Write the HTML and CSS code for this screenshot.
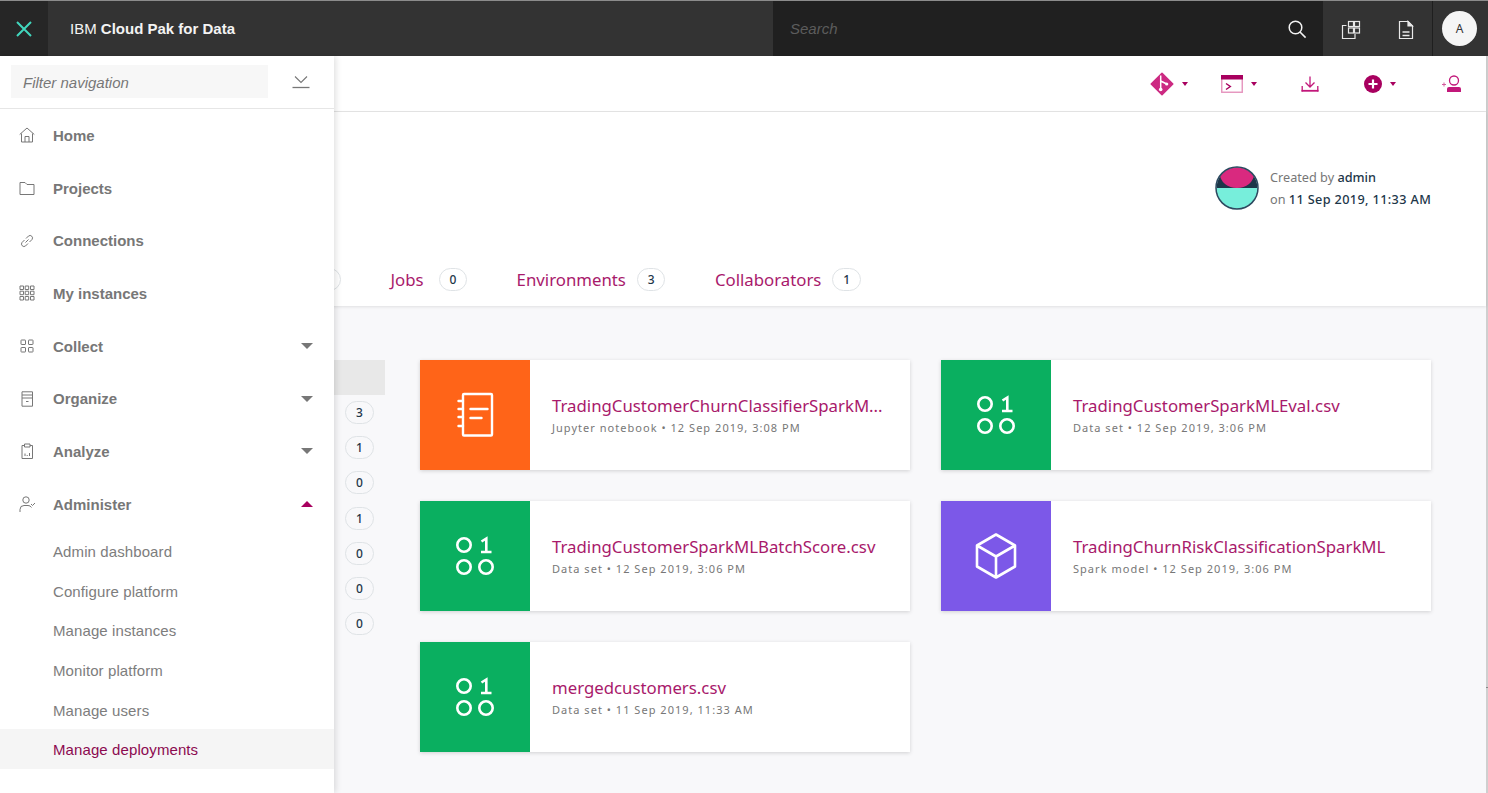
FILE: index.html
```html
<!DOCTYPE html>
<html lang="en">
<head>
<meta charset="utf-8">
<title>IBM Cloud Pak for Data</title>
<link rel="stylesheet" href="styles.css">
</head>
<body>
<header class="topbar">
  <button class="close-btn" aria-label="Close navigation">
    <svg width="16" height="16" viewBox="0 0 16 16"><path d="M1 1l14 14M15 1L1 15" stroke="#41d6bd" stroke-width="2" fill="none"/></svg>
  </button>
  <div class="brand">IBM <b>Cloud Pak for Data</b></div>
  <div class="search">
    <span class="search-text">Search</span>
    <svg class="search-icon" width="20" height="20" viewBox="0 0 20 20"><circle cx="8.500" cy="8.500" r="6.300" stroke="#f3f3f3" stroke-width="1.500" fill="none"/><path d="M13 13l5.600 5.600" stroke="#f3f3f3" stroke-width="1.600" fill="none"/></svg>
  </div>
  <div class="top-icons">
    <svg width="20" height="22" viewBox="0 0 20 22" fill="none" stroke="#e8e8e8" stroke-width="1.200"><rect x="7.500" y="3.500" width="5" height="5"/><rect x="13.500" y="3.500" width="5" height="5"/><rect x="7.500" y="10" width="5" height="5"/><rect x="13.500" y="10" width="5" height="5"/><path d="M5.500 7.500H1.500v13h12.500V16"/></svg>
    <svg width="20" height="22" viewBox="0 0 20 22" fill="none" stroke="#e8e8e8" stroke-width="1.200"><path d="M3.500 3.500h8.500l4.500 4.500v12.500h-13z"/><path d="M12 3.500l4.500 4.500H12z" fill="#e8e8e8"/><path d="M6.500 14h7M6.500 17.500h7" stroke-width="1.400"/></svg>
  </div>
  <div class="account"><span class="avatar">A</span></div>
</header>

<main class="page">
  <div class="toolbar">
    <span class="tool tool-git">
      <svg width="24" height="24" viewBox="0 0 24 24"><path d="M12 1.200L22.800 12 12 22.800 1.200 12z" fill="#cc2a82" stroke="#cc2a82" stroke-width="1.500" stroke-linejoin="round"/><path d="M10.700 3.500v14M10.700 9l6 3" stroke="#fff" stroke-width="1.500"/><circle cx="10.700" cy="17.500" r="1.800" fill="#fff"/><circle cx="16.700" cy="12" r="1.600" fill="#fff"/></svg>
      <i class="caret"></i>
    </span>
    <span class="tool tool-term">
      <svg width="22" height="18" viewBox="0 0 22 18" fill="none"><rect x=".750" y=".750" width="20.500" height="16.500" stroke="#e593bd" stroke-width="1.400"/><rect x="0" y="0" width="22" height="4.500" fill="#a8005f"/><path d="M5 8.500l4.300 3-4.300 3" stroke="#a8005f" stroke-width="1.500"/></svg>
      <i class="caret"></i>
    </span>
    <span class="tool tool-down">
      <svg width="18" height="18" viewBox="0 0 18 18" fill="none" stroke="#c2187a" stroke-width="1.300"><path d="M9 1.500v10M4.500 7.500L9 12l4.500-4.500M1.200 11v5.500M16.800 11v5.500"/><path d="M.500 15.800h17" stroke-width="1.800"/></svg>
    </span>
    <span class="tool tool-add">
      <svg width="18" height="18" viewBox="0 0 18 18"><circle cx="9" cy="9" r="9" fill="#a8005f"/><path d="M9 4.500v9M4.500 9h9" stroke="#fff" stroke-width="2.200"/></svg>
      <i class="caret"></i>
    </span>
    <span class="tool tool-user">
      <svg width="20" height="18" viewBox="0 0 20 18" fill="none"><circle cx="12" cy="5.500" r="4.500" stroke="#c2187a" stroke-width="1.300"/><path d="M5 17v-3a2 2 0 0 1 2-2h10a2 2 0 0 1 2 2v3z" fill="#c2187a"/><path d="M0 9.500h4M2 7.500v4" stroke="#d45a9c" stroke-width="1"/></svg>
    </span>
  </div>

  <section class="project-head">
    <div class="creator">
      <svg class="creator-pic" width="44" height="44" viewBox="0 0 44 44"><defs><clipPath id="pic"><circle cx="22" cy="22" r="20.500"/></clipPath></defs><g clip-path="url(#pic)"><rect width="44" height="44" fill="#1d3649"/><ellipse cx="22" cy="8" rx="17" ry="14" fill="#d9297f"/><rect y="22" width="44" height="22" fill="#77eedb"/></g><circle cx="22" cy="22" r="21" fill="none" stroke="#2c4a60" stroke-width="1.500"/></svg>
      <div class="creator-text">
        <p>Created by <b>admin</b></p>
        <p>on <b class="created-date">11 Sep 2019, 11:33 AM</b></p>
      </div>
    </div>
    <nav class="tabs">
      <span class="tab"><span class="badge">0</span></span>
      <a class="tab tab-jobs">Jobs <span class="badge">0</span></a>
      <a class="tab">Environments <span class="badge">3</span></a>
      <a class="tab">Collaborators <span class="badge">1</span></a>
    </nav>
  </section>

  <section class="assets">
    <aside class="filters">
      <div class="filter-selected"></div>
      <span class="badge">3</span>
      <span class="badge">1</span>
      <span class="badge">0</span>
      <span class="badge">1</span>
      <span class="badge">0</span>
      <span class="badge">0</span>
      <span class="badge">0</span>
    </aside>
    <div class="cards">
      <article class="card">
        <div class="thumb thumb-orange">
          <svg width="40" height="46" viewBox="0 0 40 46" fill="none" stroke="#fff" stroke-width="2.400" stroke-linejoin="round"><rect x="8" y="2" width="29" height="41.500" rx="1"/><path d="M3.500 9H8M3.500 17H8M3.500 25H8M3.500 34H8M15.500 17h17M15.500 26h11" stroke-linecap="round"/></svg>
        </div>
        <div class="card-body"><h3>TradingCustomerChurnClassifierSparkM...</h3><p>Jupyter notebook • 12 Sep 2019, 3:08 PM</p></div>
      </article>
      <article class="card">
        <div class="thumb thumb-green"><svg width="44" height="42" viewBox="0 0 44 42"><use href="#bits"/></svg></div>
        <div class="card-body"><h3>TradingCustomerSparkMLEval.csv</h3><p>Data set • 12 Sep 2019, 3:06 PM</p></div>
      </article>
      <article class="card">
        <div class="thumb thumb-green"><svg width="44" height="42" viewBox="0 0 44 42"><use href="#bits"/></svg></div>
        <div class="card-body"><h3>TradingCustomerSparkMLBatchScore.csv</h3><p>Data set • 12 Sep 2019, 3:06 PM</p></div>
      </article>
      <article class="card">
        <div class="thumb thumb-purple">
          <svg width="42" height="46" viewBox="0 0 42 46" fill="none" stroke="#fff" stroke-width="2.600" stroke-linejoin="round"><path d="M21 1.500l19 11v21l-19 11-19-11v-21zM2 12.500l19 11 19-11M21 23.500v21"/></svg>
        </div>
        <div class="card-body"><h3>TradingChurnRiskClassificationSparkML</h3><p>Spark model • 12 Sep 2019, 3:06 PM</p></div>
      </article>
      <article class="card">
        <div class="thumb thumb-green"><svg width="44" height="42" viewBox="0 0 44 42"><use href="#bits"/></svg></div>
        <div class="card-body"><h3>mergedcustomers.csv</h3><p>Data set • 11 Sep 2019, 11:33 AM</p></div>
      </article>
    </div>
  </section>
</main>

<svg class="defs" width="0" height="0"><defs><g id="bits" fill="none" stroke="#fff" stroke-width="2.600"><circle cx="11" cy="10" r="6.700"/><circle cx="11" cy="32" r="6.700"/><circle cx="33" cy="32" r="6.700"/><path d="M28.500 6.500l4.800-3v13.500M28 17h10.500"/></g></defs></svg>

<aside class="drawer">
  <div class="drawer-filter">
    <div class="filter-input">Filter navigation</div>
    <svg width="18" height="14" viewBox="0 0 18 14" fill="none" stroke="#777" stroke-width="1.100"><path d="M3 1.500l6 6 6-6"/><path d="M.500 12.500h17" stroke-width="1.300"/></svg>
  </div>
  <ul class="nav">
    <li class="nav-item"><svg viewBox="0 0 16 16"><path d="M.700 7.500L8 1l7.300 6.500M2.500 6.500v8.500h11V6.500M6 15V9.500h4V15"/></svg>Home</li>
    <li class="nav-item"><svg viewBox="0 0 16 16"><path d="M1 2.500h5l2 2h7v10H1z"/></svg>Projects</li>
    <li class="nav-item"><svg viewBox="0 0 16 16"><path d="M6.500 9.500l3-3M5.500 7L3 9.500a2.500 2.500 0 0 0 3.500 3.500L9 10.500M7 5.500L9.500 3a2.500 2.500 0 0 1 3.500 3.500L10.500 9"/></svg>Connections</li>
    <li class="nav-item"><svg viewBox="0 0 16 16"><path d="M1 1h3.500v3.500H1zM6.200 1h3.500v3.500H6.200zM11.500 1H15v3.500h-3.500zM1 6.200h3.500v3.500H1zM6.200 6.200h3.500v3.500H6.200zM11.500 6.200H15v3.500h-3.500zM1 11.500h3.500V15H1zM6.200 11.500h3.500V15H6.200zM11.500 11.500H15V15h-3.500z"/></svg>My instances</li>
    <li class="nav-item"><svg viewBox="0 0 16 16"><rect x="2" y="2" width="4.500" height="4.500" rx=".5"/><rect x="9.500" y="2" width="4.500" height="4.500" rx=".5"/><rect x="2" y="9.500" width="4.500" height="4.500" rx=".5"/><rect x="9.500" y="9.500" width="4.500" height="4.500" rx=".5"/></svg>Collect<i class="arrow"></i></li>
    <li class="nav-item"><svg viewBox="0 0 16 16"><path d="M3 .800h10.500v14.400H3zM3 4h10.500M3 7h10.500M7 10.500h2.500"/></svg>Organize<i class="arrow"></i></li>
    <li class="nav-item"><svg viewBox="0 0 16 16"><path d="M5.500 2.500H3v13h10.500v-13H11M5.500 1h5.500v3H5.500zM6 13v-2.500M8.200 13v-1M10.500 13v-3"/></svg>Analyze<i class="arrow"></i></li>
    <li class="nav-item"><svg viewBox="0 0 16 16"><circle cx="7" cy="4" r="3.200"/><path d="M1 16v-2.500a4 4 0 0 1 4-4h4a4 4 0 0 1 3.500 2M12 8l1.500 1.500L16 7"/></svg>Administer<i class="arrow arrow-up"></i></li>
    <li class="nav-sub nav-sub-first">Admin dashboard</li>
    <li class="nav-sub">Configure platform</li>
    <li class="nav-sub">Manage instances</li>
    <li class="nav-sub">Monitor platform</li>
    <li class="nav-sub">Manage users</li>
    <li class="nav-sub nav-sub-active">Manage deployments</li>
  </ul>
</aside>
</body>
</html>
```
FILE: styles.css
```css
* { box-sizing: border-box; }
html, body { margin: 0; height: 100%; }
body {
  width: 1488px;
  height: 793px;
  overflow: hidden;
  position: relative;
  background: #fff;
  font-family: "Liberation Sans", Arial, sans-serif;
  color: #1d3649;
}
body::after {
  content: "";
  position: absolute;
  right: 0;
  top: 687px;
  width: 2px;
  height: 1px;
  background: #888;
}
p, h3, ul { margin: 0; padding: 0; }

.topbar {
  height: 56px;
  display: flex;
  align-items: stretch;
  background: #333;
  border-top: 1px solid #8c8c8c;
  color: #f3f3f3;
}
.close-btn {
  width: 48px;
  padding: 0;
  border: 0;
  background: #262626;
  display: flex;
  align-items: center;
  justify-content: center;
}
.brand {
  width: 725px;
  padding-left: 22px;
  font-size: 15px;
  line-height: 55px;
  white-space: nowrap;
}
.search {
  width: 550px;
  background: #202020;
  display: flex;
  align-items: center;
  justify-content: space-between;
  padding: 0 16px 0 17px;
}
.search-text { font-size: 15px; font-style: italic; color: #5c5c5c; }
.top-icons {
  width: 110px;
  display: flex;
  align-items: center;
  justify-content: space-between;
  padding: 0 16px 0 18px;
  border-right: 1px solid #1f1f1f;
}
.account {
  flex: 1;
  display: flex;
  align-items: center;
  padding-left: 9px;
}
.avatar {
  width: 35px;
  height: 35px;
  border-radius: 50%;
  background: #f5f5f5;
  color: #333;
  font-family: "Noto Sans", sans-serif;
  font-size: 12px;
  line-height: 35px;
  text-align: center;
}

.page {
  height: 737px;
  border-right: 2px solid #cfcfcf;
  font-family: "Noto Sans", sans-serif;
  display: flex;
  flex-direction: column;
}
.toolbar {
  height: 56px;
  flex: none;
  display: flex;
  align-items: center;
  border-bottom: 1px solid #e6e6e6;
  box-shadow: 0 1px 2px rgba(0,0,0,.06);
  position: relative;
}
.tool { display: flex; align-items: center; gap: 8px; }
.tool-git { margin-left: 1150px; }
.tool-term { margin-left: 33px; }
.tool-down { margin-left: 44px; }
.tool-add { margin-left: 44.500px; }
.tool-user { margin-left: 46.500px; }
.caret {
  width: 0; height: 0;
  border-left: 3.500px solid transparent;
  border-right: 3.500px solid transparent;
  border-top: 4px solid #a8005f;
}

.project-head {
  height: 194px;
  flex: none;
  background: #fff;
  display: flex;
  flex-direction: column;
  justify-content: space-between;
  box-shadow: 0 1px 3px rgba(0,0,0,.1);
  position: relative;
}
.creator {
  display: flex;
  align-items: center;
  gap: 11px;
  margin: 54px 0 0 1215px;
}
.creator-pic { flex: none; }
.creator-text { font-size: 12.700px; line-height: 22px; color: #777; }
.creator-text b { font-weight: 500; color: #1d3649; }
.creator-text .created-date { letter-spacing: .36px; }

.tabs {
  display: flex;
  align-items: center;
  height: 50px;
  padding: 0 0 4px 312.500px;
  gap: 49.500px;
}
.tab { display: flex; align-items: center; gap: 11px; font-size: 16.800px; color: #a8196b; }
.tab-jobs { gap: 15px; }
.badge {
  display: block;
  width: 28.500px;
  height: 23px;
  border: 1px solid #dfe3e6;
  border-radius: 12px;
  background: #fff;
  font-size: 12px;
  font-weight: 500;
  line-height: 21px;
  text-align: center;
  color: #1d3649;
}

.assets {
  flex: 1;
  background: #f8f8fa;
  display: flex;
  padding-top: 54px;
}
.filters {
  width: 385px;
  flex: none;
  display: flex;
  flex-direction: column;
  align-items: flex-end;
  padding-right: 11px;
}
.filter-selected { width: 385px; margin-right: -11px; height: 35px; background: #e8e8e8; margin-bottom: 6px; }
.filters .badge { width: 29px; margin-bottom: 12.200px; background: #f8f8fa; }
.cards {
  margin-left: 35px;
  display: grid;
  grid-template-columns: 490px 490px;
  grid-auto-rows: 110px;
  gap: 31px;
}
.card {
  display: flex;
  background: #fff;
  box-shadow: 0 1px 4px rgba(0,0,0,.16);
}
.thumb {
  width: 110px;
  flex: none;
  display: flex;
  align-items: center;
  justify-content: center;
}
.thumb-orange { background: #ff6418; }
.thumb-green { background: #0aaf60; }
.thumb-purple { background: #7c58e8; }
.card-body {
  padding: 35px 0 0 22px;
  min-width: 0;
}
.card-body h3 {
  font-size: 16.800px;
  font-weight: 400;
  line-height: 22px;
  color: #a8196b;
  white-space: nowrap;
}
.card-body p {
  margin-top: 3px;
  font-size: 11px;
  line-height: 16px;
  letter-spacing: 1.030px;
  color: #777;
  white-space: nowrap;
}

.defs { position: absolute; }

.drawer {
  position: absolute;
  left: 0;
  top: 56px;
  bottom: 0;
  width: 334px;
  background: #fff;
  box-shadow: 2px 0 6px rgba(0,0,0,.12);
}
.drawer-filter {
  height: 53px;
  border-bottom: 1px solid #e6e6e6;
  display: flex;
  align-items: center;
  gap: 24px;
  padding: 0 0 0 11px;
}
.filter-input {
  width: 257px;
  height: 33px;
  margin-top: -1px;
  background: #f7f7f7;
  padding-left: 12px;
  font-size: 15px;
  font-style: italic;
  line-height: 36px;
  color: #777;
}
.nav { list-style: none; }
.nav-item {
  height: 52.700px;
  display: flex;
  align-items: center;
  padding: 0 21px 0 53px;
  position: relative;
  font-size: 15px;
  font-weight: 700;
  color: #777;
}
.nav-item svg {
  position: absolute;
  left: 19px;
  top: 50%;
  margin-top: -8px;
  width: 16px;
  height: 16px;
  fill: none;
  stroke: #777;
  stroke-width: 1;
}
.arrow {
  margin-left: auto;
  width: 0; height: 0;
  border-left: 6px solid transparent;
  border-right: 6px solid transparent;
  border-top: 6px solid #777;
}
.arrow-up { border-top: 0; border-bottom: 6px solid #a8005f; }
.nav-sub {
  height: 39.600px;
  padding: 1px 0 0 53px;
  font-size: 15px;
  letter-spacing: .1px;
  line-height: 40.600px;
  color: #7d7d7d;
}
.nav-sub-first { margin-top: .800px; }
.nav-sub-active { background: #f5f5f5; color: #8c0a50; }
```
